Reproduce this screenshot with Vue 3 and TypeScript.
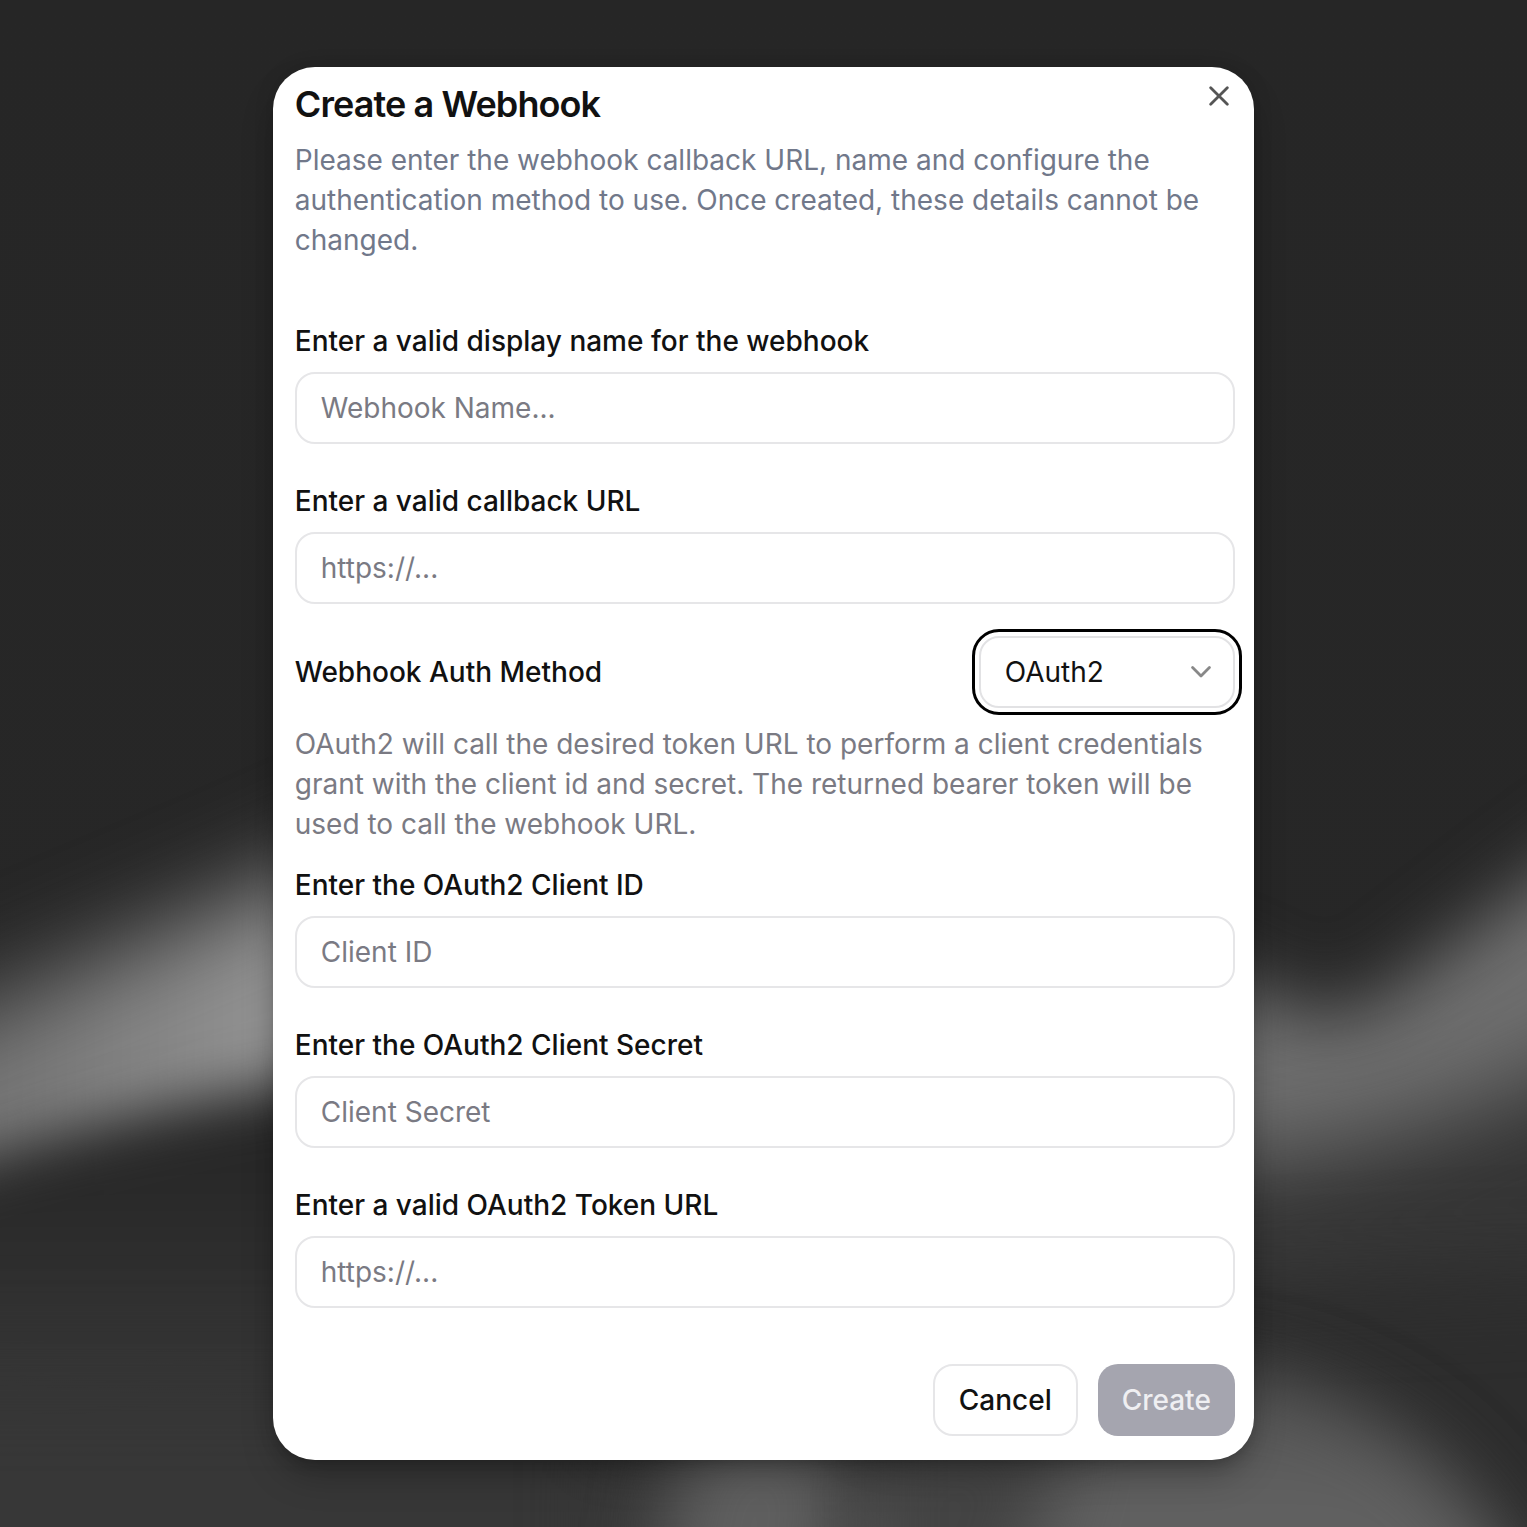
<script setup lang="ts">
import { ref } from 'vue'

interface Field {
  id: string
  label: string
  placeholder: string
}

const basicFields: Field[] = [
  { id: 'name', label: 'Enter a valid display name for the webhook', placeholder: 'Webhook Name...' },
  { id: 'url', label: 'Enter a valid callback URL', placeholder: 'https://...' },
]

const oauthFields: Field[] = [
  { id: 'clientId', label: 'Enter the OAuth2 Client ID', placeholder: 'Client ID' },
  { id: 'clientSecret', label: 'Enter the OAuth2 Client Secret', placeholder: 'Client Secret' },
  { id: 'tokenUrl', label: 'Enter a valid OAuth2 Token URL', placeholder: 'https://...' },
]

const values = ref<Record<string, string>>({})
const method = ref('OAuth2')
</script>

<template>
  <div class="page">
    <svg class="backdrop" viewBox="0 0 1527 1527" preserveAspectRatio="none" aria-hidden="true">
      <defs>
        <linearGradient id="base" x1="0" y1="0" x2="0" y2="1">
          <stop offset="0" stop-color="#262626" />
          <stop offset="0.78" stop-color="#272727" />
          <stop offset="0.88" stop-color="#313131" />
          <stop offset="1" stop-color="#373737" />
        </linearGradient>
        <linearGradient id="band" gradientUnits="userSpaceOnUse" x1="0" y1="0" x2="290" y2="0">
          <stop offset="0" stop-color="#757575" />
          <stop offset="1" stop-color="#959595" />
        </linearGradient>
        <linearGradient id="fade" gradientUnits="userSpaceOnUse" x1="0" y1="1100" x2="0" y2="1320">
          <stop offset="0" stop-color="#262626" />
          <stop offset="0.4" stop-color="#292929" />
          <stop offset="1" stop-color="#323232" />
        </linearGradient>
        <linearGradient id="hill" gradientUnits="userSpaceOnUse" x1="0" y1="1360" x2="0" y2="1500">
          <stop offset="0" stop-color="#505050" />
          <stop offset="1" stop-color="#616161" />
        </linearGradient>
        <filter id="soft" x="-30%" y="-50%" width="160%" height="200%" color-interpolation-filters="sRGB">
          <feGaussianBlur stdDeviation="36" />
        </filter>
        <filter id="softer" x="-30%" y="-50%" width="160%" height="200%" color-interpolation-filters="sRGB">
          <feGaussianBlur stdDeviation="48" />
        </filter>
        <filter id="crisp" x="-30%" y="-50%" width="160%" height="200%" color-interpolation-filters="sRGB">
          <feGaussianBlur stdDeviation="28" />
        </filter>
      </defs>
      <rect width="1527" height="1527" fill="url(#base)" />
      <path d="M-200 1085 L0 1000 L270 888 L500 785 L500 1250 L-200 1330Z" fill="url(#band)" filter="url(#softer)" />
      <path d="M-200 1216 L0 1154 Q130 1113 290 1084 L500 1050 L500 1400 L-200 1400Z" fill="url(#fade)" filter="url(#crisp)" />
      <rect x="-200" y="1370" width="1000" height="400" fill="#373737" filter="url(#softer)" />
      <path d="M1000 890 L1250 985 Q1330 1045 1400 985 L1527 888 L1760 720 L1760 1080 L1527 1180 L1300 1250 L1000 1280Z" fill="#6f6f6f" filter="url(#soft)" />
      <path d="M1000 1180 L1255 1160 Q1400 1140 1527 1086 L1800 950 L1800 1310 L1000 1310Z" fill="#363636" filter="url(#softer)" />
      <path d="M1000 1300 L1760 1270 L1760 1727 L1000 1727Z" fill="#2d2d2d" filter="url(#softer)" />
      <path d="M600 1440 L1150 1370 Q1250 1355 1360 1410 Q1440 1450 1490 1527 L1600 1700 L600 1700Z" fill="#383838" filter="url(#soft)" />
      <path d="M860 1500 L1150 1375 Q1250 1360 1350 1410 Q1430 1450 1485 1527 L1600 1700 L860 1700Z" fill="url(#hill)" filter="url(#soft)" />
      <path d="M690 1420 L850 1420 L825 1700 L630 1700Z" fill="#5f5f5f" filter="url(#soft)" />
      <path d="M870 1420 L1070 1420 L990 1700 L870 1700Z" fill="#434343" filter="url(#soft)" />
    </svg>

    <section class="dialog" role="dialog" aria-labelledby="dialog-title">
      <header>
        <h2 id="dialog-title">Create a Webhook</h2>
        <p class="intro">
          Please enter the webhook callback URL, name and configure the authentication method to use. Once
          created, these details cannot be changed.
        </p>
      </header>
      <button class="close" type="button" aria-label="Close">
        <svg viewBox="0 0 20 20"><path d="M1.7 1.7 18.3 18.3M18.3 1.7 1.7 18.3" /></svg>
      </button>

      <form @submit.prevent>
        <div v-for="field in basicFields" :key="field.id" class="field">
          <label :for="field.id">{{ field.label }}</label>
          <input :id="field.id" v-model="values[field.id]" :placeholder="field.placeholder" />
        </div>

        <div class="method">
          <label>Webhook Auth Method</label>
          <button class="select" type="button">
            <span>{{ method }}</span>
            <svg viewBox="0 0 20 12"><path d="M1.6 1.6 10 10 18.4 1.6" /></svg>
          </button>
        </div>
        <p class="hint">
          OAuth2 will call the desired token URL to perform a client credentials grant with the client id and
          secret. The returned bearer token will be used to call the webhook URL.
        </p>

        <div v-for="field in oauthFields" :key="field.id" class="field">
          <label :for="field.id">{{ field.label }}</label>
          <input :id="field.id" v-model="values[field.id]" :placeholder="field.placeholder" />
        </div>

        <footer>
          <button class="button" type="button">Cancel</button>
          <button class="button primary" type="submit" disabled>Create</button>
        </footer>
      </form>
    </section>
  </div>
</template>

<style>
body {
  margin: 0;
  overflow: hidden;
}
</style>

<style scoped>
.page {
  position: relative;
  display: flex;
  align-items: center;
  justify-content: center;
  width: 100%;
  height: 100vh;
  overflow: hidden;
  background: #262626;
  color: #111;
  font: 400 28px/40px Inter, sans-serif;
}
.backdrop {
  position: absolute;
  inset: 0;
  width: 100%;
  height: 100%;
}
.dialog {
  position: relative;
  box-sizing: border-box;
  width: 981.5px;
  height: 1393.5px;
  padding: 19.25px 19.5px 24px 22px;
  border-radius: 42px;
  background: #fff;
  box-shadow: 0 20px 36px -6px rgb(0 0 0 / 0.28), 0 8px 12px -8px rgb(0 0 0 / 0.2), 0 0 20px rgb(0 0 0 / 0.12);
}
h2 {
  margin: 0;
  font-size: 36px;
  line-height: 36px;
  font-weight: 600;
  letter-spacing: -0.9px;
}
.intro {
  margin: 18px 0 67px;
  color: #71788a;
}
.hint {
  margin: 16px 0 27px;
  color: #7a7a83;
}
.close {
  position: absolute;
  top: 19px;
  right: 25px;
  display: flex;
  padding: 0;
  border: 0;
  background: none;
}
.close svg {
  width: 20px;
  height: 20px;
}
svg path {
  stroke-linecap: round;
  stroke-linejoin: round;
}
.close path {
  fill: none;
  stroke: #555;
  stroke-width: 2.8;
}
.field {
  display: flex;
  flex-direction: column;
  gap: 17px;
  margin-bottom: 43px;
}
label {
  font-weight: 500;
  line-height: 28px;
}
input {
  box-sizing: border-box;
  width: 100%;
  height: 72px;
  padding: 0 24px;
  border: 2px solid #e6e6e8;
  border-radius: 20px;
  outline: none;
  background: #fff;
  color: inherit;
  font: inherit;
}
input::placeholder {
  color: #7a7a83;
  opacity: 1;
}
.method {
  display: flex;
  align-items: center;
  justify-content: space-between;
  margin-top: -11px;
}
.select {
  display: flex;
  align-items: center;
  justify-content: space-between;
  box-sizing: border-box;
  width: 256px;
  height: 72px;
  padding: 0 22px 0 24px;
  border: 2px solid #e2e2e4;
  border-radius: 20px;
  outline: 3px solid #000;
  outline-offset: 4px;
  background: #fff;
  color: #111;
  font: inherit;
}
.select svg {
  width: 20px;
  height: 12px;
}
.select path {
  fill: none;
  stroke: #888;
  stroke-width: 2.8;
}
footer {
  display: flex;
  justify-content: flex-end;
  gap: 20px;
  margin-top: 56px;
}
.field:has(+ footer) {
  margin-bottom: 0;
}
.button {
  box-sizing: border-box;
  height: 72px;
  width: 145px;
  padding: 0;
  border: 2px solid #e6e6e8;
  border-radius: 20px;
  background: #fff;
  color: #111;
  font: inherit;
  font-weight: 500;
}
.button.primary {
  width: 137px;
  border: 0;
  background: #a5a5af;
  color: #efeff2;
}
</style>
